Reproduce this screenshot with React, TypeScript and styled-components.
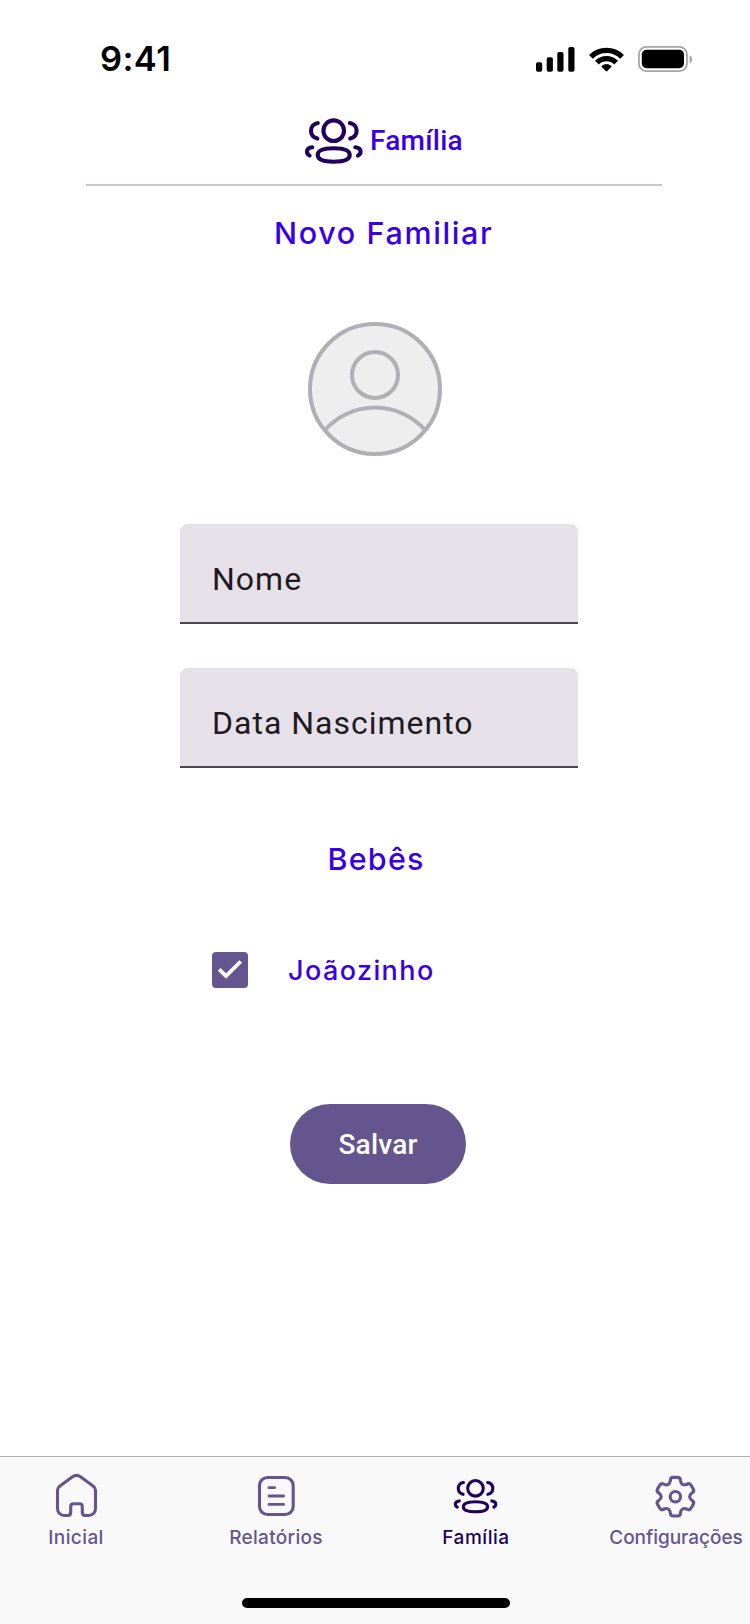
import React from 'react';
import styled, { createGlobalStyle } from 'styled-components';

const colors = {
  brand: '#3a00e5',
  deep: '#21005d',
  primary: '#65558f',
  field: '#e6e0e9',
  text: '#1d1b20',
};

const GlobalStyle = createGlobalStyle`
  *, *::before, *::after { box-sizing: border-box; }
  body { margin: 0; background: #fff; }
  svg { display: block; flex: none; }
`;

const Screen = styled.div`
  width: 750px;
  height: 1624px;
  display: flex;
  flex-direction: column;
  overflow: hidden;
  background: #fff;
  font-family: Inter, 'Liberation Sans', sans-serif;
`;

const StatusBar = styled.div`
  display: flex;
  align-items: center;
  justify-content: space-between;
  height: 78px;
  margin-top: 20px;
  padding: 0 57px 0 100px;
  flex: none;
`;

const Time = styled.span`
  padding-bottom: 1px;
  font-size: 34.5px;
  font-weight: 600;
  line-height: 40px;
  letter-spacing: 0.4px;
  color: #000;
`;

const StatusIcons = styled.div`
  display: flex;
  align-items: center;
  gap: 14px;
`;

const Header = styled.header`
  display: flex;
  align-items: center;
  gap: 6px;
  width: 576px;
  height: 88px;
  margin-left: 86px;
  padding-left: 218px;
  border-bottom: 2px solid #cac4d0;
  flex: none;
`;

const HeaderTitle = styled.h1`
  margin: 0;
  font: 500 28px/36px Roboto, sans-serif;
  letter-spacing: 0.25px;
  color: ${colors.brand};
`;

const SectionTitle = styled.h2<{ $top: number; $left: number; $spacing: number }>`
  margin: ${p => p.$top}px 0 0 ${p => p.$left}px;
  font-size: 30.5px;
  font-weight: 500;
  line-height: 40px;
  letter-spacing: ${p => p.$spacing}px;
  white-space: nowrap;
  color: ${colors.brand};
`;

const AvatarButton = styled.button`
  align-self: center;
  margin: 69px 0 0;
  padding: 0;
  border: 0;
  background: none;
`;

const Form = styled.div`
  display: flex;
  flex-direction: column;
  gap: 44px;
  width: 398px;
  margin: 68px 0 0 180px;
`;

const Field = styled.div`
  display: flex;
  align-items: center;
  height: 100px;
  padding: 12px 32px 0;
  border-bottom: 2px solid #49454f;
  background: ${colors.field};
  border-radius: 8px 8px 0 0;
  font: 400 32px/48px Roboto, sans-serif;
  letter-spacing: 1px;
  color: ${colors.text};
`;

const CheckRow = styled.label`
  display: flex;
  align-items: center;
  gap: 40px;
  height: 36px;
  margin: 73px 0 0 212px;
`;

const CheckBox = styled.span`
  width: 36px;
  height: 36px;
  border-radius: 4px;
  background: ${colors.primary};
`;

const CheckLabel = styled.span`
  padding-top: 1px;
  font-size: 27px;
  font-weight: 500;
  line-height: 36px;
  letter-spacing: 1.4px;
  color: ${colors.brand};
`;

const SaveButton = styled.button`
  width: 176px;
  height: 80px;
  margin: 116px 0 0 290px;
  padding: 2px 0 0;
  border: 0;
  border-radius: 40px;
  background: ${colors.primary};
  color: #fff;
  font: 500 28px/40px Roboto, sans-serif;
  letter-spacing: 0.2px;
`;

const TabBar = styled.nav`
  display: flex;
  flex-direction: column;
  align-items: center;
  justify-content: space-between;
  height: 168px;
  margin-top: auto;
  padding: 15px 0 16px;
  border-top: 1px solid #b0b0b0;
  background: #f9f9f9;
  flex: none;
`;

const Tabs = styled.div`
  display: grid;
  grid-template-columns: repeat(4, 200px);
  width: 800px;
  margin-left: 2px;
`;

const Tab = styled.div<{ $active?: boolean; $spacing: number }>`
  display: flex;
  flex-direction: column;
  align-items: center;
  gap: 6px;
  font-size: 19px;
  font-weight: 500;
  line-height: 24px;
  letter-spacing: ${p => p.$spacing}px;
  color: ${p => (p.$active ? colors.deep : colors.primary)};
`;

const IconBox = styled.span`
  display: flex;
  align-items: center;
  justify-content: center;
  width: 48px;
  height: 48px;
`;

const HomeIndicator = styled.div`
  width: 268px;
  height: 10px;
  margin-left: 2px;
  border-radius: 5px;
  background: #000;
`;

const SignalIcon = () => (
  <svg width="39" height="25" viewBox="0 0 39 25" fill="#000">
    <rect x="0" y="15.2" width="6.2" height="9.6" rx="1.8" />
    <rect x="10.7" y="10.2" width="6.2" height="14.6" rx="1.8" />
    <rect x="21.3" y="5" width="6.2" height="19.8" rx="1.8" />
    <rect x="32.3" y="0" width="6.2" height="24.8" rx="1.8" />
  </svg>
);

const WifiIcon = () => (
  <svg width="35" height="25" viewBox="0 0 35 25" fill="none" stroke="#000" strokeWidth="5.3">
    <path d="M1.9 9.8A22 22 0 0 1 33.1 9.8" />
    <path d="M7.9 15.6A13.6 13.6 0 0 1 27.1 15.6" />
    <path d="M17.5 24.2L12.8 19.4A7 7 0 0 1 22.2 19.4Z" fill="#000" strokeWidth="1" strokeLinejoin="round" />
  </svg>
);

const BatteryIcon = () => (
  <svg width="55" height="26" viewBox="0 0 55 26">
    <rect x="0.9" y="0.9" width="48" height="24.2" rx="7.4" fill="none" stroke="#a6a6a6" strokeWidth="1.8" />
    <rect x="3.8" y="3.8" width="42.2" height="18.4" rx="4.8" fill="#000" />
    <path d="M51.6 9.2A4.4 4.4 0 0 1 51.6 17.2Z" fill="#a6a6a6" />
  </svg>
);

const FamilyIcon = ({ width }: { width: number }) => (
  <svg
    width={width}
    height={width * 0.8}
    viewBox="0 0 60 48"
    fill="none"
    stroke={colors.deep}
    strokeWidth="4.1"
    strokeLinecap="round"
  >
    <circle cx="29.7" cy="13.7" r="10.3" />
    <path d="M13.7 38C13.7 33.2 19.5 31.3 29.7 31.3S45.7 33.2 45.7 38S39.9 44.7 29.7 44.7S13.7 42.8 13.7 38Z" />
    <path d="M13.8 6C9.6 6.7 7 9.8 7 13.8S9.6 20.6 13.4 21.6" />
    <path d="M45.8 6C50 6.7 52.6 9.8 52.6 13.8S50 20.6 46.2 21.6" />
    <path d="M8.3 30.3C5.4 30.7 3 32 3 34.8C3 36.6 4 37.7 5.6 38.5" />
    <path d="M51.3 30.3C54.2 30.7 56.6 32 56.6 34.8C56.6 36.6 55.6 37.7 54 38.5" />
  </svg>
);

const AvatarIcon = () => (
  <svg width="134" height="134" viewBox="0 0 134 134" fill="none" stroke="#afafb6" strokeWidth="4">
    <circle cx="67" cy="67" r="65" fill="#eee" />
    <circle cx="67" cy="53" r="23" />
    <path d="M17 108A67 67 0 0 1 117 108" />
  </svg>
);

const lineIcon = {
  width: 48,
  height: 48,
  viewBox: '0 0 48 48',
  fill: 'none',
  stroke: colors.primary,
  strokeWidth: 3.1,
  strokeLinecap: 'round' as const,
  strokeLinejoin: 'round' as const,
};

const HomeIcon = () => (
  <svg {...lineIcon}>
    <path d="M5.5 18.3C5.5 16.5 6.3 15.2 7.6 14.2L20.5 4.8C22.9 3 26.1 3 28.5 4.8L41.4 14.2C42.7 15.2 43.5 16.5 43.5 18.3V36.5C43.5 40.5 40.5 43.5 36.5 43.5H33.3C31.5 43.5 30.3 42.3 30.3 40.5V34.5C30.3 33 29.3 31.8 27.5 31.8H21.5C19.7 31.8 18.7 33 18.7 34.5V40.5C18.7 42.3 17.5 43.5 15.7 43.5H12.5C8.5 43.5 5.5 40.5 5.5 36.5Z" />
  </svg>
);

const ReportIcon = () => (
  <svg {...lineIcon}>
    <rect x="7.5" y="5.5" width="33.7" height="37" rx="8" />
    <path d="M17 15.7H22.6M17 24H31.6M17 32.4H31.6" strokeWidth="2.8" />
  </svg>
);

const GearIcon = () => (
  <svg {...lineIcon}>
    <g transform="translate(23.4 24.7)">
      <circle r="5.2" />
      {[0, 60, 120, 180, 240, 300].map(angle => (
        <path
          key={angle}
          transform={`rotate(${angle})`}
          d="M-5-16.5C-5-18.5-3.7-19.3-2-19.3H2C3.7-19.3 5-18.5 5-16.5Q5.8-10.05 11.8-12.6"
        />
      ))}
    </g>
  </svg>
);

export default function App() {
  return (
    <>
      <GlobalStyle />
      <Screen>
        <StatusBar>
          <Time>9:41</Time>
          <StatusIcons>
            <SignalIcon />
            <WifiIcon />
            <BatteryIcon />
          </StatusIcons>
        </StatusBar>

        <Header>
          <FamilyIcon width={60} />
          <HeaderTitle>Família</HeaderTitle>
        </Header>

        <SectionTitle $top={27} $left={274} $spacing={1.63}>Novo Familiar</SectionTitle>

        <AvatarButton aria-label="Foto">
          <AvatarIcon />
        </AvatarButton>

        <Form>
          <Field>Nome</Field>
          <Field>Data Nascimento</Field>
        </Form>

        <SectionTitle $top={71} $left={327.5} $spacing={1.2}>Bebês</SectionTitle>

        <CheckRow>
          <CheckBox>
            <svg width="36" height="36" viewBox="0 0 36 36" fill="none" stroke="#fff" strokeWidth="3.8">
              <path d="M7.2 17.4L14 24.1L28.7 9.5" />
            </svg>
          </CheckBox>
          <CheckLabel>Joãozinho</CheckLabel>
        </CheckRow>

        <SaveButton>Salvar</SaveButton>

        <TabBar>
          <Tabs>
            <Tab $spacing={0.4}>
              <IconBox><HomeIcon /></IconBox>
              Inicial
            </Tab>
            <Tab $spacing={0.28}>
              <IconBox><ReportIcon /></IconBox>
              Relatórios
            </Tab>
            <Tab $active $spacing={0.55}>
              <IconBox><FamilyIcon width={45.4} /></IconBox>
              Família
            </Tab>
            <Tab $spacing={-0.04}>
              <IconBox><GearIcon /></IconBox>
              Configurações
            </Tab>
          </Tabs>
          <HomeIndicator />
        </TabBar>
      </Screen>
    </>
  );
}
